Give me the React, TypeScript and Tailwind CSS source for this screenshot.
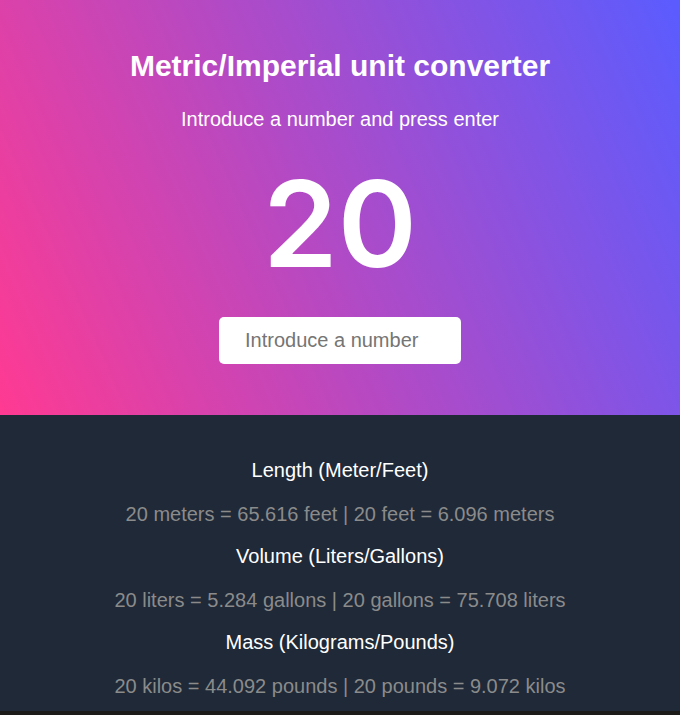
import React, { useState } from "react";

const conversions = [
  { title: "Length (Meter/Feet)", a: "meters", b: "feet", ab: 3.2808, ba: 0.3048 },
  { title: "Volume (Liters/Gallons)", a: "liters", b: "gallons", ab: 0.2642, ba: 3.78541 },
  { title: "Mass (Kilograms/Pounds)", a: "kilos", b: "pounds", ab: 2.2046, ba: 0.4536 },
];

export default function App() {
  const [value, setValue] = useState(20);
  const [draft, setDraft] = useState("");

  return (
    <div className="min-h-[715px] bg-[#1c1b1a] font-['Liberation_Sans',Arial,sans-serif]">
      {/* hero */}
      <div className="flex h-[415px] flex-col items-center bg-[linear-gradient(66deg,#ff3a92,#5a5cff)] pt-[46px] text-white">
        <h1 className="text-[30px] font-bold leading-[40px]">Metric/Imperial unit converter</h1>
        <p className="mt-[21px] text-[20px] leading-[24px]">Introduce a number and press enter</p>
        <div className="mt-[28px] font-['Inter',sans-serif] text-[120px] font-semibold leading-[130px]">{value}</div>
        <input
          value={draft}
          onChange={(e) => setDraft(e.target.value)}
          onKeyDown={(e) => {
            if (e.key === "Enter" && draft !== "" && !isNaN(Number(draft))) {
              setValue(Number(draft));
              setDraft("");
            }
          }}
          placeholder="Introduce a number"
          className="mt-[28px] h-[47px] w-[242px] rounded-[5px] bg-white px-[26px] text-[20px] text-gray-700 outline-none placeholder:text-[#757575]"
        />
      </div>

      {/* results */}
      <div className="flex h-[296px] flex-col items-center bg-[#1f2937] pt-[43px]">
        {conversions.map((c) => (
          <div key={c.title} className="flex flex-col items-center">
            <h2 className="text-[20px] leading-[24px] text-white">{c.title}</h2>
            <p className="mt-[20px] mb-[18px] text-[20px] leading-[24px] text-[#8b8b8b]">
              {value} {c.a} = {(value * c.ab).toFixed(3)} {c.b} | {value} {c.b} = {(value * c.ba).toFixed(3)} {c.a}
            </p>
          </div>
        ))}
      </div>
    </div>
  );
}
